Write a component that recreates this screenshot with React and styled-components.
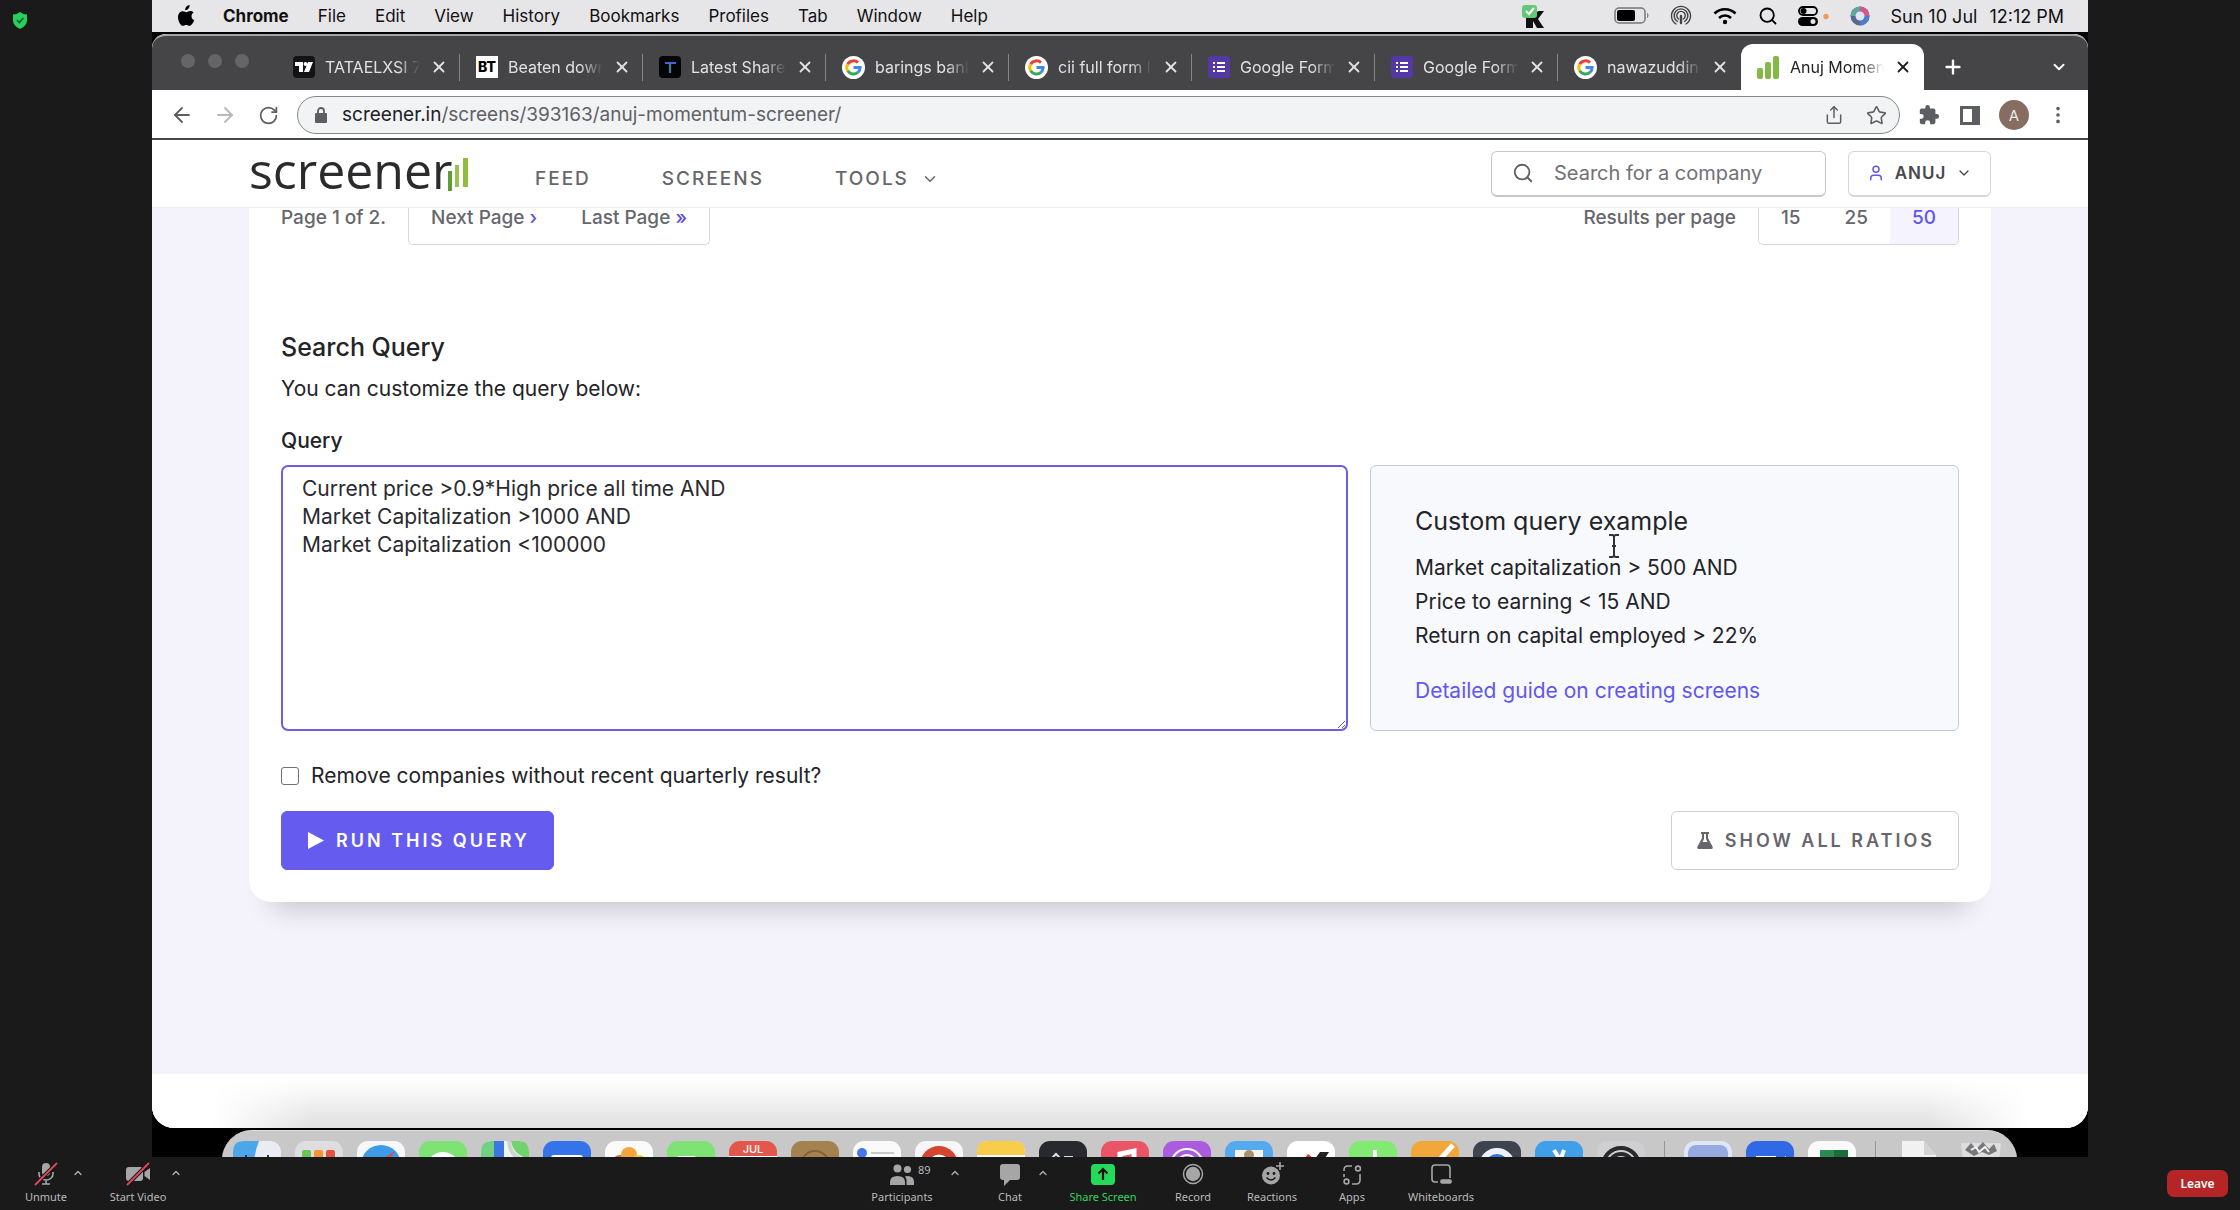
import React from "react";
import styled, { createGlobalStyle, css } from "styled-components";
import {
  ArrowLeft, ArrowRight, ChevronDown, ChevronUp, EllipsisVertical, Plus, RotateCw,
  Search, Share, Star, User, X,
} from "lucide-react";

const sans = `Inter, "Liberation Sans", sans-serif`;
const meetingFont = `"Noto Sans", "Open Sans", sans-serif`;

const GlobalStyle = createGlobalStyle`
  *, *::before, *::after { box-sizing: border-box; }
  body { margin: 0; background: #1a1a1a; font-family: ${sans}; }
  button, input, textarea { font-family: inherit; }
  svg { display: block; flex: none; }
  h2, h3, p { margin: 0; font-weight: 400; }
`;

const resetButton = css`
  border: 0;
  padding: 0;
  background: none;
  color: inherit;
  display: flex;
  align-items: center;
  justify-content: center;
`;

/* ---------- meeting shell ---------- */

const Meeting = styled.div`
  position: relative;
  height: 100vh;
  display: flex;
  flex-direction: column;
  overflow: hidden;
`;

const ShieldBadge = styled.div`
  position: absolute;
  left: 12px;
  top: 12px;
`;

const SharedScreen = styled.main`
  flex: 1;
  min-height: 0;
  margin: 0 152px;
  background: #000;
  display: flex;
  flex-direction: column;
  overflow: hidden;
`;

/* ---------- mac menu bar ---------- */

const MenuBar = styled.div`
  height: 32px;
  flex: none;
  display: flex;
  align-items: center;
  padding: 0 24px;
  background: #e6e6e9;
  color: #111;
  font-size: 18px;
`;

const Menus = styled.nav`
  display: flex;
  align-items: center;
  gap: 29px;
  margin-left: 27px;
  flex: 1;
`;

const MenuItem = styled.button`
  ${resetButton}
  font-size: 17px;
  font-weight: ${(p) => (p.$strong ? 700 : 400)};
`;

const StatusIcons = styled.div`
  display: flex;
  align-items: center;
  gap: 20px;
`;

const AppStatus = styled.div`
  margin-right: 48px;
`;

const Clock = styled.time`
  display: flex;
  gap: 12px;
`;

/* ---------- browser window ---------- */

const BrowserWindow = styled.div`
  flex: none;
  height: 1094px;
  margin-top: 2px;
  display: flex;
  flex-direction: column;
  border-radius: 14px 14px 22px 22px;
  overflow: hidden;
  background: #fff;
`;

const TabStrip = styled.div`
  height: 56px;
  flex: none;
  display: flex;
  align-items: flex-end;
  background: #454547;
  border-top: 2px solid #a5a5a7;
  border-radius: 14px 14px 0 0;
  padding-left: 29px;
`;

const TrafficLights = styled.div`
  display: flex;
  gap: 13px;
  width: 96px;
  height: 54px;
  align-items: center;
  padding-bottom: 4px;
  span {
    width: 14px;
    height: 14px;
    border-radius: 50%;
    background: #656567;
  }
`;

const Tab = styled.div`
  position: relative;
  width: 183px;
  height: 46px;
  display: flex;
  align-items: center;
  gap: 10px;
  padding: 0 12px 0 16px;
  border-radius: 12px 12px 0 0;
  color: ${(p) => (p.$active ? "#222" : "#e2e2e3")};
  background: ${(p) => (p.$active ? "#fff" : "transparent")};
  &::after {
    content: "";
    position: absolute;
    right: 0;
    top: 10px;
    height: 27px;
    width: 1px;
    background: ${(p) => (p.$active || p.$last ? "transparent" : "#858587")};
  }
`;

const TabTitle = styled.span`
  flex: 1;
  min-width: 0;
  overflow: hidden;
  white-space: nowrap;
  font-size: 16px;
  line-height: 22px;
  mask-image: linear-gradient(to right, #000 76%, transparent 100%);
`;

const TabClose = styled.button`
  ${resetButton}
`;

const StripButton = styled.button`
  ${resetButton}
  width: 58px;
  height: 46px;
  color: #fff;
  margin-left: ${(p) => (p.$end ? "auto" : "0")};
`;

const Toolbar = styled.div`
  height: 50px;
  flex: none;
  display: flex;
  align-items: center;
  gap: 17px;
  padding: 2px 18px 0;
  border-bottom: 2px solid #48484a;
  color: #5c5e62;
`;

const ToolGroup = styled.div`
  display: flex;
  align-items: center;
  gap: ${(p) => p.$gap}px;
`;

const IconButton = styled.button`
  ${resetButton}
  width: 24px;
  height: 24px;
  color: ${(p) => (p.$muted ? "#b8b8ba" : "inherit")};
`;

const AddressBar = styled.div`
  flex: 1;
  height: 38px;
  display: flex;
  align-items: center;
  gap: 18px;
  padding: 0 11px 0 16px;
  border: 1px solid #858789;
  border-radius: 19px;
  background: #f1f3f5;
`;

const Url = styled.a`
  flex: 1;
  margin-left: -4px;
  color: #5f6165;
  font-size: 19px;
  line-height: 24px;
  text-decoration: none;
  b { font-weight: 400; color: #202124; }
`;

const Avatar = styled.button`
  ${resetButton}
  width: 30px;
  height: 30px;
  border-radius: 50%;
  background: #866c61;
  color: #f0e8e4;
  font-size: 15px;
`;

/* ---------- site ---------- */

const Site = styled.div`
  flex: 1;
  min-height: 0;
  display: flex;
  flex-direction: column;
  background: #f4f3fc;
  color: #232328;
`;

const SiteHeader = styled.header`
  height: 68px;
  flex: none;
  display: flex;
  align-items: center;
  padding: 0 97px;
  background: #fff;
  border-bottom: 1px solid #ececf0;
`;

const Logo = styled.a`
  display: flex;
  align-items: center;
  width: 219px;
  color: #2b2b2e;
  font-family: "Open Sans", sans-serif;
  font-size: 50px;
  font-weight: 500;
  line-height: 50px;
  text-decoration: none;
  span { margin: -8px -5px 0 0; }
`;

const SiteNav = styled.nav`
  flex: 1;
  display: flex;
  gap: 71px;
  margin-left: 67px;
  padding-top: 10px;
`;

const NavLink = styled.a`
  display: flex;
  align-items: center;
  gap: 12px;
  color: #66666c;
  font-size: 19px;
  font-weight: 500;
  line-height: 24px;
  letter-spacing: 2px;
  text-decoration: none;
`;

const SearchBox = styled.label`
  width: 335px;
  height: 46px;
  display: flex;
  align-items: center;
  gap: 20px;
  padding: 0 20px;
  border: 1px solid #c5c5ca;
  border-bottom-width: 2px;
  border-radius: 6px;
  color: #606066;
  input {
    width: 100%;
    min-width: 0;
    border: 0;
    padding: 0;
    outline: 0;
    background: none;
    font-size: 20px;
    color: #222;
  }
  input::placeholder { color: #707076; opacity: 1; }
`;

const UserButton = styled.button`
  ${resetButton}
  width: 143px;
  height: 46px;
  gap: 10px;
  margin-left: 22px;
  border: 1px solid #d6d6da;
  border-bottom-width: 2px;
  border-radius: 6px;
  color: #47474d;
  font-size: 17px;
  font-weight: 600;
  letter-spacing: 1px;
`;

const Card = styled.section`
  margin: 0 97px;
  padding: 0 32px 32px;
  background: #fff;
  border-radius: 0 0 22px 22px;
  box-shadow: 0 30px 26px -24px rgba(0, 0, 0, 0.2);
`;

const Pager = styled.div`
  display: flex;
  align-items: flex-start;
  gap: 22px;
  color: #66666c;
  font-size: 19px;
  font-weight: 500;
  line-height: 20px;
`;

const Spacer = styled.span`
  flex: 1;
`;

const PagerBox = styled.div`
  display: flex;
  border: 1px solid #d8d8dc;
  border-top: 0;
  border-radius: 0 0 5px 5px;
  overflow: hidden;
`;

const PageLink = styled.a`
  padding: 0 22px 16px;
  color: ${(p) => (p.$current ? "#6355ee" : "inherit")};
  background: ${(p) => (p.$current ? "#f4f3fe" : "transparent")};
  text-decoration: none;
  i { font-style: normal; color: #5a4be0; }
`;

const QueryHead = styled.div`
  padding-top: 86px;
  display: flex;
  flex-direction: column;
`;

const Heading = styled.h2`
  font-size: 25px;
  font-weight: ${(p) => (p.$light ? 400 : 500)};
  line-height: 32px;
`;

const Text = styled.p`
  margin-top: ${(p) => p.$gap}px;
  font-size: 21px;
  line-height: 34px;
`;

const FieldLabel = styled.label`
  margin-top: 18px;
  font-size: 21px;
  font-weight: 500;
  line-height: 34px;
`;

const QueryGrid = styled.div`
  display: grid;
  grid-template-columns: 1067fr 589fr;
  gap: 22px;
  margin-top: 7px;
`;

const QueryInput = styled.textarea`
  width: 100%;
  height: 266px;
  padding: 8px 19px;
  border: 2px solid #6a5ee8;
  border-radius: 7px;
  outline: 0;
  resize: vertical;
  color: #2a2a2f;
  font-size: 21px;
  line-height: 28px;
`;

const Example = styled.aside`
  padding: 39px 44px 0;
  border: 1px solid #bfcde2;
  border-radius: 6px;
  background: #f7f9fd;
`;

const GuideLink = styled.a`
  display: block;
  margin-top: 21px;
  color: #6156f0;
  font-size: 21px;
  line-height: 34px;
  text-decoration: none;
`;

const CheckRow = styled.label`
  display: flex;
  align-items: center;
  gap: 12px;
  margin-top: 28px;
  font-size: 21px;
  line-height: 34px;
  input {
    appearance: none;
    width: 18px;
    height: 18px;
    margin: 0;
    border: 1px solid #6e6e74;
    border-radius: 3px;
    background: #fff;
  }
`;

const Actions = styled.div`
  display: flex;
  justify-content: space-between;
  margin-top: 18px;
`;

const ActionButton = styled.button`
  ${resetButton}
  height: 59px;
  gap: 12px;
  padding: 0 23px 0 25px;
  border: 1px solid ${(p) => (p.$primary ? "#655bef" : "#cfcfd4")};
  border-radius: 6px;
  background: ${(p) => (p.$primary ? "#655bef" : "#fff")};
  color: ${(p) => (p.$primary ? "#fff" : "#66666c")};
  font-size: 18px;
  font-weight: 600;
  letter-spacing: 3px;
`;

const SiteFooter = styled.footer`
  display: flex;
  justify-content: center;
  margin-top: auto;
  height: 54px;
  padding: 0 60px;
  background: #fff;
`;

const FooterShade = styled.div`
  flex: 1;
  background: linear-gradient(to bottom, rgba(0, 0, 0, 0) 10%, rgba(0, 0, 0, 0.12) 100%);
  mask-image: linear-gradient(to right, transparent, #000 100px calc(100% - 100px), transparent);
`;

const TextCursor = styled.svg`
  position: absolute;
  left: 1608px;
  top: 534px;
`;

/* ---------- dock ---------- */

const Dock = styled.div`
  flex: none;
  height: 80px;
  margin: 2px 71px 0 70px;
  padding: 10px 0 0 11px;
  display: flex;
  align-items: flex-start;
  gap: 14px;
  border-top: 1px solid #dcdcdc;
  border-radius: 30px 30px 0 0;
  background: #c8c8c9;
`;

const DockDivider = styled.span`
  width: 1px;
  height: 48px;
  margin: 0 5px;
  background: #959597;
`;

const DockItem = styled.svg`
  width: 48px;
  height: 48px;
`;

/* ---------- meeting controls ---------- */

const Controls = styled.footer`
  height: 53px;
  flex: none;
  display: flex;
  align-items: flex-start;
  justify-content: space-between;
  padding: 0 12px 0 23px;
  font-family: ${meetingFont};
  color: #b9b9b9;
`;

const ControlGroup = styled.div`
  display: flex;
`;

const ControlGap = styled.span`
  width: ${(p) => p.$size}px;
`;

const Control = styled.button`
  ${resetButton}
  flex-direction: column;
  width: ${(p) => p.$width}px;
  padding-top: 5px;
  gap: 2px;
  color: ${(p) => (p.$green ? "#2ed75f" : "inherit")};
  font-family: inherit;
  font-size: 11px;
  line-height: 18px;
  white-space: nowrap;
`;

const IconWithCount = styled.span`
  position: relative;
  sup {
    position: absolute;
    left: 28px;
    top: 1px;
    font-size: 11px;
    line-height: 14px;
  }
`;

const Caret = styled.button`
  ${resetButton}
  width: 18px;
  height: 32px;
`;

const Leave = styled.button`
  ${resetButton}
  width: 61px;
  height: 27px;
  margin-top: 13px;
  border-radius: 7px;
  background: #b62525;
  color: #fff;
  font-family: inherit;
  font-size: 12px;
  font-weight: 600;
`;

/* ---------- drawings ---------- */

const AppleMark = () => (
  <svg width="20" height="22" viewBox="0 0 20 22" fill="#000">
    <path d="M13.6 0c.2 1.4-.4 2.7-1.100 3.600-.8 1-2.100 1.700-3.300 1.600-.2-1.300.4-2.600 1.100-3.500C11.100.8 12.500.1 13.600 0zM17.600 7.600c-1.300.8-2.100 2-2.100 3.700 0 1.900 1.100 3.300 2.700 3.900-.6 1.800-2.700 5.600-4.900 5.600-1.200 0-1.700-.8-3.200-.8-1.500 0-2 .8-3.200.8C4.400 20.800 2 15.800 2 12.200c0-3.900 2.400-6 4.800-6 1.500 0 2.700 1 3.600 1 .9 0 2.300-1.100 4.100-1.100 1.300 0 2.500.6 3.100 1.500z" />
  </svg>
);

const KeyMark = () => (
  <svg width="24" height="24" viewBox="0 0 24 24">
    <path d="M4 8h7v5l5-6h6l-6 8 6 9h-7l-4-7v7H4z" fill="#111" />
    <rect x="0" y="1" width="15" height="13" rx="3" fill="#63c979" />
    <path d="m4 7 3 3 5-6" stroke="#fff" strokeWidth="2" fill="none" />
  </svg>
);

const Battery = () => (
  <svg width="36" height="18" viewBox="0 0 36 18">
    <rect x="1" y="1" width="30" height="15" rx="4" fill="none" stroke="#777" strokeWidth="1.500" />
    <rect x="3" y="3" width="18" height="11" rx="2" fill="#000" />
    <path d="M33 6v5c2-.5 2-4.500 0-5z" fill="#888" />
  </svg>
);

const AirDrop = () => (
  <svg width="22" height="22" viewBox="0 0 22 22" fill="none" stroke="#444" strokeWidth="1.400" strokeLinecap="round">
    <path d="M6 19a9.500 9.500 0 1 1 10 0M7.500 16.500a6.800 6.800 0 1 1 7 0M8.600 14a4.200 4.200 0 1 1 4.800 0" />
    <path d="M11 11v7" strokeWidth="2.400" />
  </svg>
);

const Wifi = () => (
  <svg width="26" height="20" viewBox="0 0 26 20" fill="none" stroke="#000" strokeWidth="2.600">
    <path d="M2.500 7.500a15 15 0 0 1 21 0M7 12a8.500 8.500 0 0 1 12 0" />
    <circle cx="13" cy="16" r="2.200" fill="#000" stroke="none" />
  </svg>
);

const ControlCenter = () => (
  <svg width="32" height="20" viewBox="0 0 32 20">
    <rect x="1" y="1" width="18" height="8" rx="4" fill="none" stroke="#000" strokeWidth="1.800" />
    <circle cx="5.500" cy="5" r="3" fill="#000" />
    <rect x="0" y="11" width="20" height="9" rx="4.500" fill="#000" />
    <circle cx="15" cy="15.500" r="2.500" fill="#e6e6e9" />
    <circle cx="28" cy="10.500" r="2.700" fill="#f19a57" />
  </svg>
);

const Siri = () => (
  <svg width="20" height="20" viewBox="0 0 20 20">
    <circle cx="10" cy="10" r="9.500" fill="#56688f" />
    <path d="M10 .5A9.500 9.500 0 0 1 19.500 10L10 10z" fill="#d0598a" />
    <path d="M.5 10A9.500 9.500 0 0 1 10 .5V10z" fill="#5fa6a0" />
    <path d="M19.500 10A9.500 9.500 0 0 1 10 19.500V10z" fill="#4f7dca" />
    <circle cx="10" cy="10" r="4.500" fill="#dfe6f2" />
  </svg>
);

const GoogleIcon = () => (
  <svg width="23" height="23" viewBox="0 0 23 23">
    <circle cx="11.500" cy="11.500" r="11.500" fill="#fff" />
    <g fill="none" strokeWidth="3">
      <path d="M16 6.600A6.700 6.700 0 0 0 5.700 8.200" stroke="#ea4335" />
      <path d="M5.700 8.200a6.700 6.700 0 0 0 0 6.600" stroke="#fbbc05" />
      <path d="M5.700 14.800a6.700 6.700 0 0 0 10.200 1.600" stroke="#34a853" />
      <path d="M15.900 16.400a6.700 6.700 0 0 0 2.200-4.900H11.500" stroke="#4285f4" />
    </g>
  </svg>
);

const FormsIcon = () => (
  <svg width="22" height="22" viewBox="0 0 22 22">
    <rect width="22" height="22" rx="3" fill="#5338a6" />
    <path d="M9 7h8M9 11h8M9 15h8" stroke="#fff" strokeWidth="2" />
    <path d="M5 7h2M5 11h2M5 15h2" stroke="#fff" strokeWidth="2" />
  </svg>
);

const TradingIcon = () => (
  <svg width="22" height="22" viewBox="0 0 22 22">
    <rect width="22" height="22" rx="4" fill="#131315" />
    <path d="M2 6h8v10H6v-6H2zM15 6h5l-4 10h-5z" fill="#fff" />
    <circle cx="12.500" cy="8" r="1.900" fill="#fff" />
  </svg>
);

const BtBadge = styled.span`
  flex: none;
  width: 22px;
  height: 22px;
  background: #fff;
  color: #000;
  font: 800 14px/22px ${sans};
  text-align: center;
`;

const TickerIcon = () => (
  <svg width="22" height="22" viewBox="0 0 22 22">
    <rect width="22" height="22" rx="4" fill="#050507" />
    <path d="M6 7h11" stroke="#4860d8" strokeWidth="2.200" />
    <path d="M11 7v10" stroke="#3e7f9a" strokeWidth="2.200" />
  </svg>
);

const ScreenerIcon = () => (
  <svg width="23" height="23" viewBox="0 0 23 23" fill="#83b944">
    <rect x="0" y="12" width="6" height="11" rx="2" />
    <rect x="8" y="6" width="6" height="17" rx="2" />
    <rect x="16" y="0" width="6" height="23" rx="2" />
  </svg>
);

const Lock = () => (
  <svg width="14" height="18" viewBox="0 0 14 18">
    <rect x="1" y="7" width="12" height="10" rx="1" fill="#5c5e62" />
    <path d="M4 8V5a3 3 0 0 1 6 0v3" fill="none" stroke="#5c5e62" strokeWidth="1.800" />
  </svg>
);

const Puzzle = () => (
  <svg width="22" height="22" viewBox="0 0 24 24" fill="#5c5e62">
    <path d="M20.500 11H19V7a2 2 0 0 0-2-2h-4V3.500a2.500 2.500 0 0 0-5 0V5H4a2 2 0 0 0-2 2v3.800h1.500a2.700 2.700 0 0 1 0 5.400H2V20a2 2 0 0 0 2 2h3.800v-1.500a2.700 2.700 0 0 1 5.400 0V22H17a2 2 0 0 0 2-2v-4h1.500a2.500 2.500 0 0 0 0-5z" />
  </svg>
);

const SidePanel = () => (
  <svg width="20" height="19" viewBox="0 0 20 19">
    <path d="M0 0h20v19H0zM3 3v13h9V3z" fill="#5c5e62" fillRule="evenodd" />
  </svg>
);

const LogoBars = () => (
  <svg width="24" height="36" viewBox="0 0 24 36">
    <rect x="0" y="15" width="4" height="20" fill="#5f9e36" />
    <rect x="7" y="9" width="4" height="22" fill="#97c24d" />
    <rect x="15" y="2" width="5" height="29" fill="#8fbd3f" />
  </svg>
);

const Flask = () => (
  <svg width="16" height="17" viewBox="0 0 16 17" fill="#66666c">
    <path d="M4 0h8v2h-1v4l4.500 8.500q1 2.500-1.500 2.500H2Q-.5 17 .5 14.500L5 6V2H4zM7 2v5l-1.500 3h5L9 7V2z" fillRule="evenodd" />
  </svg>
);

const Play = () => (
  <svg width="17" height="17" viewBox="0 0 17 17" fill="#fff"><path d="M1 0 17 8.500 1 17z" /></svg>
);

const Shield = () => (
  <svg width="16" height="17" viewBox="0 0 16 17">
    <path d="M8 0q3 2.500 7 2.500V8q0 6-7 9-7-3-7-9V2.500Q5 2.500 8 0z" fill="#25d05c" />
    <path d="m5 8 2.300 2.500L11.300 6" stroke="#12542b" strokeWidth="1.600" fill="none" />
  </svg>
);

const icon24 = { width: 24, height: 24, viewBox: "0 0 24 24" };

const MicOff = () => (
  <svg {...icon24}>
    <rect x="8" y="1" width="8" height="13" rx="4" fill="#a6a6a6" />
    <path d="M5 10v2a7 6 0 0 0 14 0v-2M12 18v4M8 22h8" fill="none" stroke="#a6a6a6" strokeWidth="1.600" />
    <path d="M1 23 23 1" stroke="#1a1a1a" strokeWidth="4" />
    <path d="M1 23 23 1" stroke="#e2485b" strokeWidth="1.800" />
  </svg>
);

const VideoOff = () => (
  <svg {...icon24}>
    <rect x="0" y="5" width="17" height="14" rx="3" fill="#a6a6a6" />
    <path d="m18.500 10 5.500-4v12l-5.500-4z" fill="#a6a6a6" />
    <path d="M1 23 23 1" stroke="#1a1a1a" strokeWidth="4" />
    <path d="M1 23 23 1" stroke="#e2485b" strokeWidth="1.800" />
  </svg>
);

const People = () => (
  <svg {...icon24} fill="#a6a6a6">
    <circle cx="7.500" cy="6.500" r="4" />
    <circle cx="17.500" cy="7.500" r="3.600" />
    <path d="M0 23v-3q0-6 7.500-6t7.500 6v3zM16.500 23H24v-3q0-6-6.500-6-1.500 0-2.500.4 1.500 1.800 1.500 4.600z" />
  </svg>
);

const ChatIcon = () => (
  <svg {...icon24} fill="#a6a6a6">
    <path d="M5 2h14q3 0 3 3v10q0 3-3 3h-7l-6 6v-6H5q-3 0-3-3V5q0-3 3-3z" />
  </svg>
);

const ShareIcon = () => (
  <svg {...icon24}>
    <rect y="2" width="24" height="21" rx="4" fill="#25d95b" />
    <path d="M12 18V7M7.500 11.500 12 7l4.500 4.500" fill="none" stroke="#111" strokeWidth="2.200" />
  </svg>
);

const RecordIcon = () => (
  <svg {...icon24}>
    <circle cx="12" cy="12" r="9.500" fill="none" stroke="#a6a6a6" strokeWidth="1.500" />
    <circle cx="12" cy="12" r="7.200" fill="#a6a6a6" />
  </svg>
);

const ReactIcon = () => (
  <svg {...icon24}>
    <circle cx="11" cy="13.500" r="9" fill="#a6a6a6" />
    <circle cx="8" cy="11.500" r="1.400" fill="#1a1a1a" />
    <circle cx="14" cy="11.500" r="1.400" fill="#1a1a1a" />
    <path d="M6.500 15.500q4.500 5 9 0" fill="none" stroke="#1a1a1a" strokeWidth="1.500" />
    <path d="M20 0v8M16 4h8" stroke="#1a1a1a" strokeWidth="4" />
    <path d="M20 0v8M16 4h8" stroke="#a6a6a6" strokeWidth="1.600" />
  </svg>
);

const AppsIcon = () => (
  <svg {...icon24} fill="none" stroke="#a6a6a6" strokeWidth="1.600">
    <circle cx="18" cy="6.500" r="2.400" />
    <circle cx="6.500" cy="19.500" r="2.400" />
    <path d="M12 4H8Q4 4 4 8v1M4 12v3M12 22h4q4 0 4-4v-6" />
  </svg>
);

const BoardIcon = () => (
  <svg {...icon24} fill="none" stroke="#a6a6a6" strokeWidth="1.600">
    <path d="M9 20H6q-3 0-3-3V6q0-3 3-3h12q3 0 3 3v10" />
    <rect x="12" y="18" width="10" height="3" rx="1" fill="#a6a6a6" />
  </svg>
);

const tile = (fill, art, key) => (
  <DockItem key={key} viewBox="0 0 48 48">
    <rect width="48" height="48" rx="11" fill={fill} />
    {art}
  </DockItem>
);

const CalendarTile = styled.div`
  flex: none;
  width: 48px;
  height: 48px;
  border-radius: 11px;
  background: linear-gradient(#e3574c 15px, #fff 15px);
  color: #fff;
  font: 500 11px/16px ${sans};
  text-align: center;
`;

const dockApps = [
  ["#e9ecf2", <><path d="M11 0h15q-5 12-5 25h4v23H11Q0 48 0 37V11Q0 0 11 0z" fill="#4ba7ea" /><path d="M13 14v8M35 14v8" stroke="#22323f" strokeWidth="2" /></>],
  ["#dedee1", <><rect x="7" y="9" width="9" height="9" rx="2" fill="#6cc552" /><rect x="19" y="9" width="9" height="9" rx="2" fill="#f0952f" /><rect x="31" y="9" width="9" height="9" rx="2" fill="#e6503f" /></>],
  ["#f5f7fa", <><circle cx="24" cy="24" r="20" fill="#3e9be8" /><path d="m38 10-11 16-6-5z" fill="#e14c43" /></>],
  ["#7ee374", <ellipse cx="24" cy="24" rx="15" ry="13" fill="#fff" />],
  ["#f0f5ee", <><path d="M0 22V11Q0 0 11 0h2v22z" fill="#70d184" /><path d="M13 0h10v48H13z" fill="#3c76e0" /><path d="M30 0q2 14 18 18V11Q48 0 37 0z" fill="#73d26d" /><path d="M28 0q1 18 20 20" fill="none" stroke="#cfd3d6" strokeWidth="4" /></>],
  ["#3574e8", <rect x="8" y="14" width="32" height="22" rx="3" fill="#fff" />],
  ["#fbfbfa", <><circle cx="15" cy="22" r="8" fill="#ec5f47" /><circle cx="24" cy="14" r="8" fill="#f4a63a" /><circle cx="34" cy="22" r="8" fill="#f2c93f" /></>],
  ["#7ee374", <rect x="9" y="15" width="21" height="18" rx="4" fill="#fff" />],
  null,
  ["#a4824f", <circle cx="24" cy="24" r="14" fill="none" stroke="#80623a" strokeWidth="2" />],
  ["#fafafa", <><circle cx="9" cy="12" r="5" fill="#4477ee" /><path d="M18 12h23" stroke="#c9c9cc" strokeWidth="2" /></>],
  ["#f7f7f7", <><circle cx="24" cy="24" r="19" fill="#d5452f" /><circle cx="24" cy="24" r="9" fill="#4383ee" stroke="#fff" strokeWidth="3" /></>],
  ["#fafafa", <path d="M0 14V11Q0 0 11 0h26q11 0 11 11v3z" fill="#f8cd4c" />],
  ["#27292c", <path d="m13 17 4-4 4 4M25 16h9" stroke="#ddd" strokeWidth="2" fill="none" />],
  ["#ea5467", <path d="M19 36V13l14-3v22" fill="none" stroke="#fff" strokeWidth="5" />],
  ["#ab5bdd", <g fill="none" stroke="#fff" strokeWidth="2"><circle cx="24" cy="24" r="16" /><circle cx="24" cy="24" r="10" /></g>],
  ["#55a9ef", <><path d="M10 9h28v30H10z" fill="#f5f2ea" /><circle cx="24" cy="14" r="5" fill="#a6926e" /></>],
  ["#fff", <><path d="m14 22 7-9 5 4-4 11z" fill="#d8382f" /><path d="m25 22 8-11h9l-9 14z" fill="#222" /></>],
  ["#82ea72", <path d="M26 9v26" stroke="#fff" strokeWidth="4" />],
  ["#f3a63a", <path d="m42 4-18 20" stroke="#fff" strokeWidth="5" />],
  ["#3e4350", <circle cx="24" cy="25" r="15" fill="#3672df" stroke="#eef1f7" strokeWidth="6" />],
  ["#3f9fe8", <path d="m19 9 5 8M29 9l-7 20" stroke="#fff" strokeWidth="4" />],
  ["#cfcfd1", <g fill="none" stroke="#29292b"><circle cx="24" cy="25" r="18" strokeWidth="4" /><circle cx="24" cy="25" r="12" strokeWidth="4" /></g>],
];

const tabs = [
  ["TATAELXSI 7", <TradingIcon />],
  ["Beaten down", <BtBadge>BT</BtBadge>],
  ["Latest Share", <TickerIcon />],
  ["barings bank", <GoogleIcon />],
  ["cii full form li", <GoogleIcon />],
  ["Google Form", <FormsIcon />],
  ["Google Form", <FormsIcon />],
  ["nawazuddin", <GoogleIcon />],
  ["Anuj Moment", <ScreenerIcon />],
];

const menus = ["File", "Edit", "View", "History", "Bookmarks", "Profiles", "Tab", "Window", "Help"];

const initialQuery = `Current price >0.9*High price all time AND
Market Capitalization >1000 AND
Market Capitalization <100000`;

function MacMenu() {
  return (
    <MenuBar>
      <AppleMark />
      <Menus>
        <MenuItem $strong>Chrome</MenuItem>
        {menus.map((m) => <MenuItem key={m}>{m}</MenuItem>)}
      </Menus>
      <StatusIcons>
        <AppStatus><KeyMark /></AppStatus>
        <Battery />
        <AirDrop />
        <Wifi />
        <Search size={20} color="#000" strokeWidth={2.2} />
        <ControlCenter />
        <Siri />
        <Clock><span>Sun 10 Jul</span><span>12:12 PM</span></Clock>
      </StatusIcons>
    </MenuBar>
  );
}

function BrowserChrome() {
  return (
    <>
      <TabStrip>
        <TrafficLights><span /><span /><span /></TrafficLights>
        {tabs.map(([title, icon], i) => (
          <Tab key={i} $active={i === 8} $last={i === 7}>
            {icon}
            <TabTitle>{title}</TabTitle>
            <TabClose aria-label="Close tab"><X size={18} strokeWidth={2.4} /></TabClose>
          </Tab>
        ))}
        <StripButton aria-label="New tab"><Plus size={22} strokeWidth={2.6} /></StripButton>
        <StripButton $end aria-label="Search tabs"><ChevronDown size={18} strokeWidth={2.6} /></StripButton>
      </TabStrip>
      <Toolbar>
        <ToolGroup $gap={19}>
          <IconButton aria-label="Back"><ArrowLeft size={24} strokeWidth={1.8} /></IconButton>
          <IconButton $muted aria-label="Forward"><ArrowRight size={24} strokeWidth={1.8} /></IconButton>
          <IconButton aria-label="Reload"><RotateCw size={21} /></IconButton>
        </ToolGroup>
        <AddressBar>
          <Lock />
          <Url href="#"><b>screener.in</b>/screens/393163/anuj-momentum-screener/</Url>
          <IconButton aria-label="Share page"><Share size={20} strokeWidth={1.8} /></IconButton>
          <IconButton aria-label="Bookmark"><Star size={21} strokeWidth={1.8} /></IconButton>
        </AddressBar>
        <ToolGroup $gap={17}>
          <IconButton aria-label="Extensions"><Puzzle /></IconButton>
          <IconButton aria-label="Side panel"><SidePanel /></IconButton>
          <Avatar>A</Avatar>
          <IconButton aria-label="More"><EllipsisVertical size={22} /></IconButton>
        </ToolGroup>
      </Toolbar>
    </>
  );
}

function ScreenerSite() {
  return (
    <Site>
      <SiteHeader>
        <Logo href="#"><span>screener</span><LogoBars /></Logo>
        <SiteNav>
          <NavLink href="#">FEED</NavLink>
          <NavLink href="#">SCREENS</NavLink>
          <NavLink href="#">TOOLS <ChevronDown size={18} /></NavLink>
        </SiteNav>
        <SearchBox>
          <Search size={22} />
          <input type="search" placeholder="Search for a company" aria-label="Search for a company" />
        </SearchBox>
        <UserButton>
          <User size={18} color="#6355ee" />ANUJ<ChevronDown size={16} />
        </UserButton>
      </SiteHeader>
      <Card>
        <Pager>
          <span>Page 1 of 2.</span>
          <PagerBox>
            <PageLink href="#">Next Page <i>›</i></PageLink>
            <PageLink href="#">Last Page <i>»</i></PageLink>
          </PagerBox>
          <Spacer />
          <span>Results per page</span>
          <PagerBox>
            <PageLink href="#">15</PageLink>
            <PageLink href="#">25</PageLink>
            <PageLink href="#" $current>50</PageLink>
          </PagerBox>
        </Pager>
        <QueryHead>
          <Heading>Search Query</Heading>
          <Text $gap={9}>You can customize the query below:</Text>
          <FieldLabel htmlFor="query">Query</FieldLabel>
        </QueryHead>
        <QueryGrid>
          <QueryInput id="query" defaultValue={initialQuery} spellCheck={false} />
          <Example>
            <Heading as="h3" $light>Custom query example</Heading>
            <Text $gap={14}>
              Market capitalization &gt; 500 AND<br />
              Price to earning &lt; 15 AND<br />
              Return on capital employed &gt; 22%
            </Text>
            <GuideLink href="#">Detailed guide on creating screens</GuideLink>
          </Example>
        </QueryGrid>
        <CheckRow>
          <input type="checkbox" />
          Remove companies without recent quarterly result?
        </CheckRow>
        <Actions>
          <ActionButton $primary><Play />RUN THIS QUERY</ActionButton>
          <ActionButton><Flask />SHOW ALL RATIOS</ActionButton>
        </Actions>
      </Card>
      <SiteFooter><FooterShade /></SiteFooter>
    </Site>
  );
}

function MacDock() {
  return (
    <Dock>
      {dockApps.map((app, i) =>
        app ? tile(app[0], app[1], i) : <CalendarTile key={i}>JUL</CalendarTile>
      )}
      <DockDivider />
      {tile("#dfe6f5", <rect x="4" y="4" width="40" height="40" rx="8" fill="#98a9e2" />)}
      {tile("#3169e4", <path d="M10 15h20v18H10zM33 20l7-5v18l-7-5z" fill="#fff" />)}
      {tile("#fafafa", <><path d="M12 9h28v30H12z" fill="#2b8c53" /><path d="M26 9h14v9H26z" fill="#1d6c3e" /></>)}
      <DockDivider />
      <DockItem viewBox="0 0 48 48">
        <path d="M7 0h22l12 14v34H7z" fill="#f1f1f2" />
        <path d="M29 0v14h12z" fill="#d3d3d5" />
      </DockItem>
      <DockItem viewBox="0 0 48 48">
        <path d="M4 2h40l-5 46H9z" fill="#dededf" />
        <path d="m8 9 6-7 5 6 7-7 6 7 5-5 3 7-8 4-7-3-8 4z" fill="#77777a" />
        <path d="m14 9 5-3 3 5 6-5 4 5" fill="none" stroke="#f2f2f2" strokeWidth="2" />
      </DockItem>
    </Dock>
  );
}

const Up = () => <Caret aria-label="More options"><ChevronUp size={12} strokeWidth={2.4} /></Caret>;

function MeetingControls() {
  return (
    <Controls>
      <ControlGroup>
        <Control $width={46}><MicOff />Unmute</Control>
        <Up />
        <ControlGap $size={22} />
        <Control $width={58}><VideoOff />Start Video</Control>
        <Up />
      </ControlGroup>
      <ControlGroup>
        <Control $width={88}><IconWithCount><People /><sup>89</sup></IconWithCount>Participants</Control>
        <Up />
        <ControlGap $size={22} />
        <Control $width={48}><ChatIcon />Chat</Control>
        <Up />
        <Control $width={102} $green><ShareIcon />Share Screen</Control>
        <Control $width={78}><RecordIcon />Record</Control>
        <Control $width={80}><ReactIcon />Reactions</Control>
        <Control $width={80}><AppsIcon />Apps</Control>
        <Control $width={98}><BoardIcon />Whiteboards</Control>
        <ControlGap $size={4} />
      </ControlGroup>
      <Leave>Leave</Leave>
    </Controls>
  );
}

export default function App() {
  return (
    <Meeting>
      <GlobalStyle />
      <ShieldBadge><Shield /></ShieldBadge>
      <SharedScreen>
        <MacMenu />
        <BrowserWindow>
          <BrowserChrome />
          <ScreenerSite />
        </BrowserWindow>
        <MacDock />
      </SharedScreen>
      <MeetingControls />
      <TextCursor width="12" height="24" viewBox="0 0 12 24" fill="none" stroke="#333" strokeWidth="2">
        <path d="M1 1h3q2 0 2 2 0-2 2-2h3M6 3v18M1 23h3q2 0 2-2 0 2 2 2h3M4 12h4" />
      </TextCursor>
    </Meeting>
  );
}
